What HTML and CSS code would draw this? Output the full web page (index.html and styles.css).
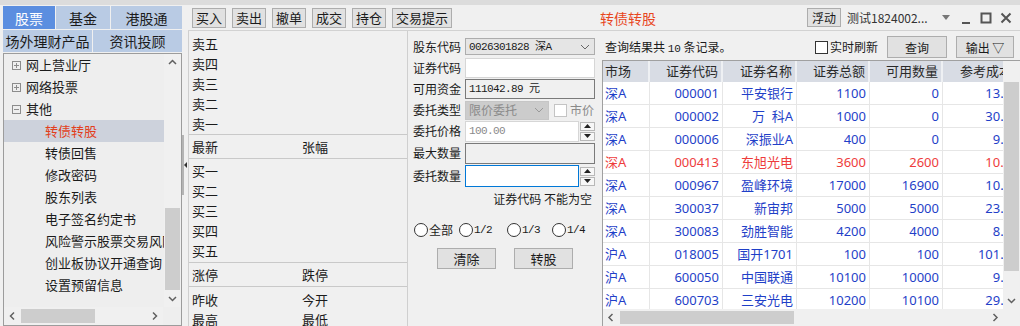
FILE: index.html
```html
<!DOCTYPE html>
<html lang="zh-CN">
<head>
  <meta charset="UTF-8">
  <title>转债转股</title>
  <link rel="stylesheet" href="styles.css">
</head>
<body>
<div class="app">
  <aside class="side">
    <div class="tabs">
      <div class="tab on t-gp">股票</div>
      <div class="tab t-jj">基金</div>
      <div class="tab t-gg">港股通</div>
    </div>
    <div class="tabs row2">
      <div class="tab t-half">场外理财产品</div>
      <div class="tab t-half">资讯投顾</div>
    </div>
    <div class="tree">
      <div class="tree-main">
        <ul class="nodes">
          <li class="node"><svg class="fold" viewBox="0 0 9 9"><rect x="0.5" y="0.5" width="8" height="8"/><path d="M2 4.5h5M4.5 2v5"/></svg>网上营业厅</li>
          <li class="node"><svg class="fold" viewBox="0 0 9 9"><rect x="0.5" y="0.5" width="8" height="8"/><path d="M2 4.5h5M4.5 2v5"/></svg>网络投票</li>
          <li class="node"><svg class="fold" viewBox="0 0 9 9"><rect x="0.5" y="0.5" width="8" height="8"/><path d="M2 4.5h5"/></svg>其他</li>
          <li class="leaf sel">转债转股</li>
          <li class="leaf">转债回售</li>
          <li class="leaf">修改密码</li>
          <li class="leaf">股东列表</li>
          <li class="leaf">电子签名约定书</li>
          <li class="leaf">风险警示股票交易风险揭示书</li>
          <li class="leaf">创业板协议开通查询</li>
          <li class="leaf">设置预留信息</li>
        </ul>
        <div class="vbar">
          <svg class="arr" viewBox="0 0 17 17"><path d="M5 10l3.5-3.5L12 10"/></svg>
          <div class="track"><div class="thumb"></div></div>
          <svg class="arr" viewBox="0 0 17 17"><path d="M5 7l3.5 3.5L12 7"/></svg>
        </div>
      </div>
      <div class="hbar">
        <svg class="harr" viewBox="0 0 16 18"><path d="M10 5.5L6.5 9l3.5 3.5"/></svg>
        <div class="htrack"><div class="hthumb"></div></div>
        <svg class="harr" viewBox="0 0 16 18"><path d="M6 5.5L9.5 9 6 12.5"/></svg>
        <div class="corner"></div>
      </div>
    </div>
  </aside>

  <div class="splitter">
    <div class="grip"><i></i><svg viewBox="0 0 3 6"><path d="M3 0v6L0 3z"/></svg></div>
  </div>

  <div class="main">
    <div class="topbar">
      <div class="toolbar">
        <button class="tbtn">买入</button>
        <button class="tbtn">卖出</button>
        <button class="tbtn">撤单</button>
        <button class="tbtn">成交</button>
        <button class="tbtn">持仓</button>
        <button class="tbtn wide">交易提示</button>
      </div>
      <div class="titlebar">
        <span class="title">转债转股</span>
        <button class="tbtn float">浮动</button>
        <span class="acct">测试1824002...</span>
        <svg class="caret" viewBox="0 0 19 10"><path d="M5 2h8l-4 5z"/></svg>
        <svg class="win" viewBox="0 0 20 20"><path d="M6 15h8"/></svg>
        <svg class="win" viewBox="0 0 20 20"><rect x="5.5" y="5.5" width="9" height="9"/></svg>
        <svg class="win" viewBox="0 0 20 20"><path d="M5.5 5.5l9 9M14.5 5.5l-9 9"/></svg>
      </div>
    </div>

    <div class="work">
      <section class="quote">
        <div class="qsec s1">
          <div class="qrow"><span>卖五</span></div>
          <div class="qrow"><span>卖四</span></div>
          <div class="qrow"><span>卖三</span></div>
          <div class="qrow"><span>卖二</span></div>
          <div class="qrow"><span>卖一</span></div>
        </div>
        <div class="qsec s2">
          <div class="qrow"><span>最新</span><span>张幅</span></div>
        </div>
        <div class="qsec s3">
          <div class="qrow"><span>买一</span></div>
          <div class="qrow"><span>买二</span></div>
          <div class="qrow"><span>买三</span></div>
          <div class="qrow"><span>买四</span></div>
          <div class="qrow"><span>买五</span></div>
        </div>
        <div class="qsec s4">
          <div class="qrow"><span>涨停</span><span>跌停</span></div>
        </div>
        <div class="qsec s5">
          <div class="qrow"><span>昨收</span><span>今开</span></div>
          <div class="qrow"><span>最高</span><span>最低</span></div>
        </div>
      </section>

      <section class="order">
        <div class="frow r1">
          <label>股东代码</label>
          <div class="field pick">0026301828 深A<svg class="chev" viewBox="0 0 10 6"><path d="M1 1l4 4 4-4"/></svg></div>
        </div>
        <div class="frow r2">
          <label>证券代码</label>
          <div class="field"></div>
        </div>
        <div class="frow r3">
          <label>可用资金</label>
          <div class="field ro">111042.89 元</div>
        </div>
        <div class="frow r4">
          <label>委托类型</label>
          <div class="field pick off">限价委托<svg class="chev" viewBox="0 0 10 6"><path d="M1 1l4 4 4-4"/></svg></div>
          <span class="chk"></span><span class="mkt">市价</span>
        </div>
        <div class="frow r5">
          <label>委托价格</label>
          <div class="field narrow muted">100.00</div>
          <div class="spin"><span><svg viewBox="0 0 7 4"><path d="M3.5 0L7 4H0z"/></svg></span><span><svg viewBox="0 0 7 4"><path d="M0 0h7L3.5 4z"/></svg></span></div>
        </div>
        <div class="frow r6">
          <label>最大数量</label>
          <div class="field ro"></div>
        </div>
        <div class="frow r7">
          <label>委托数量</label>
          <div class="field narrow focus"></div>
          <div class="spin"><span><svg viewBox="0 0 7 4"><path d="M3.5 0L7 4H0z"/></svg></span><span><svg viewBox="0 0 7 4"><path d="M0 0h7L3.5 4z"/></svg></span></div>
        </div>
        <div class="msg">证券代码&nbsp;不能为空</div>
        <div class="ratios">
          <span class="rd w45"><i></i>全部</span>
          <span class="rd w48"><i></i><b>1/2</b></span>
          <span class="rd w45"><i></i><b>1/3</b></span>
          <span class="rd"><i></i><b>1/4</b></span>
        </div>
        <div class="acts">
          <button class="btn">清除</button>
          <button class="btn">转股</button>
        </div>
      </section>

      <section class="result">
        <div class="qbar">
          <span class="count">查询结果共 <b>10</b> 条记录。</span>
          <span class="rt"><i></i>实时刷新</span>
          <button class="btn q">查询</button>
          <button class="btn out">输出 ▽</button>
        </div>
        <div class="grid">
          <div class="grid-main">
            <div class="view">
              <table>
                <colgroup>
                  <col style="width:47px"><col style="width:73px"><col style="width:74px">
                  <col style="width:73px"><col style="width:73px"><col style="width:87px">
                </colgroup>
                <thead>
                  <tr><th class="l">市场</th><th>证券代码</th><th>证券名称</th><th>证券总额</th><th>可用数量</th><th>参考成本价</th></tr>
                </thead>
                <tbody>
                  <tr><td class="l">深A</td><td>000001</td><td>平安银行</td><td>1100</td><td>0</td><td>13.520</td></tr>
                  <tr><td class="l">深A</td><td>000002</td><td class="pre">万  科A</td><td>1000</td><td>0</td><td>30.150</td></tr>
                  <tr><td class="l">深A</td><td>000006</td><td>深振业A</td><td>400</td><td>0</td><td>9.840</td></tr>
                  <tr class="red"><td class="l">深A</td><td>000413</td><td>东旭光电</td><td>3600</td><td>2600</td><td>10.260</td></tr>
                  <tr><td class="l">深A</td><td>000967</td><td>盈峰环境</td><td>17000</td><td>16900</td><td>10.610</td></tr>
                  <tr><td class="l">深A</td><td>300037</td><td>新宙邦</td><td>5000</td><td>5000</td><td>23.400</td></tr>
                  <tr><td class="l">深A</td><td>300083</td><td>劲胜智能</td><td>4200</td><td>4000</td><td>8.760</td></tr>
                  <tr><td class="l">沪A</td><td>018005</td><td>国开1701</td><td>100</td><td>100</td><td>101.200</td></tr>
                  <tr><td class="l">沪A</td><td>600050</td><td>中国联通</td><td>10100</td><td>10000</td><td>9.120</td></tr>
                  <tr><td class="l">沪A</td><td>600703</td><td>三安光电</td><td>10200</td><td>10100</td><td>29.850</td></tr>
                </tbody>
              </table>
            </div>
            <div class="vbar2">
              <div class="cap"></div>
              <div class="thumb2"></div>
              <div class="gap2"></div>
              <svg class="arr" viewBox="0 0 17 15"><path d="M5 5l3.5 3.5L12 5"/></svg>
            </div>
          </div>
          <div class="hbar2">
            <svg class="harr" viewBox="0 0 16 17"><path d="M9.5 5L6 8.5 9.5 12"/></svg>
            <div class="htrack2"><div class="hthumb2"></div></div>
            <svg class="harr" viewBox="0 0 16 17"><path d="M6.5 5L10 8.5 6.5 12"/></svg>
            <div class="corner2"></div>
          </div>
        </div>
      </section>
    </div>
  </div>
</div>
</body>
</html>
```

FILE: styles.css
```css
* { box-sizing: border-box; }
body { margin: 0; width: 1020px; height: 326px; overflow: hidden; background: #f0f0f0; color: #1b1b1b; font: 13px/20px "Noto Sans CJK SC", "Noto Sans", sans-serif; }
ul { margin: 0; padding: 0; list-style: none; }
button { font: inherit; color: inherit; margin: 0; padding: 0; cursor: default; }
svg { display: block; flex: none; }

.app { display: flex; height: 326px; border-top: 5px solid #dcdcdc; }

/* left navigation */
.side { width: 182px; flex: none; padding-left: 3px; display: flex; flex-direction: column; }
.tabs { display: flex; gap: 1px; height: 23px; margin-top: 1px; flex: none; }
.tabs.row2 { height: 22px; }
.tab { display: flex; align-items: center; justify-content: center; background: #b9cbe4; font-size: 14px; }
.tab.on { background: #5b8ee0; color: #fff; }
.t-gp { width: 52px; }
.t-jj { width: 54px; }
.t-gg, .t-half { flex: 1; }

.tree { flex: 1; min-height: 0; margin-top: 1px; border: 1px solid #9c9c9c; background: #eeeeee; display: flex; flex-direction: column; }
.tree-main { flex: 1; min-height: 0; display: flex; }
.nodes { flex: 1; overflow: hidden; white-space: nowrap; }
.nodes li { height: 22px; line-height: 22px; }
.node { display: flex; align-items: center; padding-left: 8px; }
.fold { width: 9px; height: 9px; margin-right: 5px; fill: none; stroke: #8c8c8c; }
.leaf { padding-left: 41px; }
.leaf.sel { background: #cdd2dc; color: #e2401c; }

.vbar { width: 17px; display: flex; flex-direction: column; background: #f0f0f0; }
.arr { width: 17px; height: 17px; fill: none; stroke: #606060; stroke-width: 1.5; }
.track { flex: 1; display: flex; flex-direction: column; padding: 137px 1px 0; }
.thumb { flex: 1; background: #cdcdcd; }

.hbar { height: 18px; flex: none; display: flex; background: #f0f0f0; }
.harr { width: 16px; height: 18px; fill: none; stroke: #606060; stroke-width: 1.5; }
.htrack { flex: 1; padding: 2px 0 2px 1px; }
.hthumb { width: 74px; height: 100%; background: #cdcdcd; }
.corner { width: 18px; background: #eeeeee; }

.splitter { width: 6px; flex: none; padding-top: 130px; }
.grip { display: flex; align-items: center; height: 60px; }
.grip i { width: 2px; height: 60px; background: #b4b4b4; }
.grip svg { width: 3px; height: 6px; fill: #333; }

/* main area */
.main { flex: 1; min-width: 0; display: flex; flex-direction: column; }
.topbar { height: 26px; flex: none; display: flex; border-bottom: 1px solid #d2d2d2; }
.toolbar { width: 412px; flex: none; display: flex; align-items: center; gap: 6px; padding-left: 4px; }
.tbtn { width: 34px; height: 20px; background: #e1e1e1; border: 1px solid #adadad; font-size: 13px; line-height: 18px; }
.tbtn.wide { width: 60px; }
.titlebar { flex: 1; display: flex; align-items: center; padding-right: 4px; }
.title { font-size: 14px; color: #e8461e; }
.tbtn.float { margin-left: auto; height: 19px; font-size: 12px; }
.acct { width: 90px; margin-left: 6px; font-size: 12px; color: #333; white-space: nowrap; overflow: hidden; }
.caret { width: 19px; height: 10px; fill: #777; }
.win { width: 20px; height: 20px; fill: none; stroke: #555; stroke-width: 2; }

.work { flex: 1; min-height: 0; display: flex; }

/* quote book */
.quote { width: 220px; flex: none; border-left: 1px solid #cfcfcf; border-right: 1px solid #cfcfcf; }
.qsec { border-bottom: 1px solid #c9c9c9; }
.qsec.s1 { padding-top: 3px; }
.qsec.s2, .qsec.s4 { padding: 2px 0 1px; }
.qsec.s3 { padding: 2px 0 1px; }
.qsec.s5 { padding-top: 3px; border-bottom: 0; }
.qrow { display: grid; grid-template-columns: 110px 1fr; height: 20px; line-height: 20px; padding-left: 3px; }

/* order form */
.order { width: 192px; flex: none; padding: 5px 5px 0; font-size: 12px; }
.frow { display: flex; align-items: center; height: 21px; }
.frow.r3, .frow.r5, .frow.r6 { height: 22px; }
.frow.r4 { height: 20px; }
.frow.r7 { height: 24px; }
.frow label { width: 52px; flex: none; line-height: 16px; }
.field { width: 130px; height: 20px; display: flex; align-items: center; padding: 0 4px 0 3px; border: 1px solid #d6d6d6; background: #fff; font: 11px/16px "Liberation Mono", "Noto Sans CJK SC", monospace; letter-spacing: -0.6px; white-space: nowrap; }
.r1 .field { height: 17px; }
.r5 .field, .r6 .field { height: 21px; }
.r7 .field { height: 22px; }
.field.pick { background: #e5e5e5; border-color: #adadad; }
.chev { width: 10px; height: 6px; margin-left: auto; fill: none; stroke: #666; }
.field.ro { background: #f0f0f0; border-color: #7a7a7a; }
.field.off { width: 84px; height: 19px; background: #cccccc; border-color: #c6c6c6; color: #8a8a8a; font: 12px/16px "Noto Sans CJK SC", sans-serif; letter-spacing: 0; }
.field.off .chev { stroke: #999; }
.field.narrow { width: 114px; }
.field.muted { color: #8a8a8a; }
.field.focus { border-color: #0078d7; }
.chk { width: 13px; height: 13px; margin-left: 5px; border: 1px solid #c4c4c4; background: #fff; }
.mkt { margin-left: 3px; color: #8a8a8a; line-height: 16px; }
.spin { width: 15px; margin-left: 1px; display: flex; flex-direction: column; gap: 1px; }
.spin span { height: 9px; display: flex; align-items: center; justify-content: center; border: 1px solid #b8b8b8; background: #f7f7f7; }
.spin svg { width: 7px; height: 4px; fill: #222; }
.msg { height: 22px; line-height: 22px; text-align: right; padding-right: 3px; }
.ratios { display: flex; align-items: center; height: 16px; margin: 12px 0 0 1px; }
.rd { display: flex; align-items: center; line-height: 16px; }
.rd.w45 { width: 45px; }
.rd.w48 { width: 48px; }
.rd i { width: 14px; height: 14px; margin-right: 1px; border: 1px solid #333; border-radius: 50%; background: #fff; }
.rd b { font: 11px/16px "Liberation Mono", monospace; font-weight: normal; letter-spacing: -0.6px; }
.acts { display: flex; gap: 18px; margin-top: 10px; padding-left: 24px; }
.btn { height: 21px; width: 59px; background: #e1e1e1; border: 1px solid #adadad; font-size: 13px; line-height: 19px; }

/* result list */
.result { flex: 1; min-width: 0; display: flex; flex-direction: column; }
.qbar { height: 22px; margin-top: 5px; flex: none; display: flex; align-items: center; padding: 0 6px 0 5px; font-size: 12px; }
.count b { font: normal 11px "Liberation Mono", monospace; }
.rt { display: flex; align-items: center; margin-left: auto; }
.rt i { width: 13px; height: 13px; margin-right: 2px; border: 1px solid #333; background: #fff; }
.btn.q { width: 60px; height: 22px; margin-left: 9px; font-size: 12px; }
.btn.out { width: 58px; height: 22px; margin-left: 9px; font-size: 12px; }

.grid { flex: 1; min-height: 0; margin: 2px 0 0 2px; border-left: 1px solid #a0a0a0; border-top: 1px solid #a0a0a0; display: flex; flex-direction: column; }
.grid-main { flex: 1; min-height: 0; display: flex; }
.view { flex: 1; overflow: hidden; background: #fff; }
table { width: 427px; table-layout: fixed; border-collapse: separate; border-spacing: 0; font: 13px "Noto Sans", "Noto Sans CJK SC", sans-serif; }
th, td { padding: 0 3px 0 0; text-align: right; white-space: nowrap; overflow: hidden; }
th { height: 21px; line-height: 21px; background: #d8dce4; color: #2a2a2a; font-weight: normal; border-right: 2px solid #eef0f3; }
td { line-height: 22px; border-right: 1px solid #e6e6e6; border-bottom: 1px solid #e6e6e6; color: #1f3fc8; }
th.l, td.l { text-align: left; padding: 0 0 0 2px; }
td.pre { white-space: pre; }
tr.red td { color: #ee3c3c; }

.vbar2 { width: 17px; flex: none; display: flex; flex-direction: column; background: #f0f0f0; }
.vbar2 .cap { height: 21px; }
.thumb2 { height: 189px; margin: 0 1px; background: #cdcdcd; }
.gap2 { flex: 1; }
.vbar2 .arr { height: 15px; }
.hbar2 { height: 17px; flex: none; display: flex; background: #f0f0f0; }
.hbar2 .harr { height: 17px; }
.htrack2 { flex: 1; padding: 2px 0 2px 1px; }
.hthumb2 { width: 174px; height: 100%; background: #cdcdcd; }
.corner2 { width: 17px; }
```
